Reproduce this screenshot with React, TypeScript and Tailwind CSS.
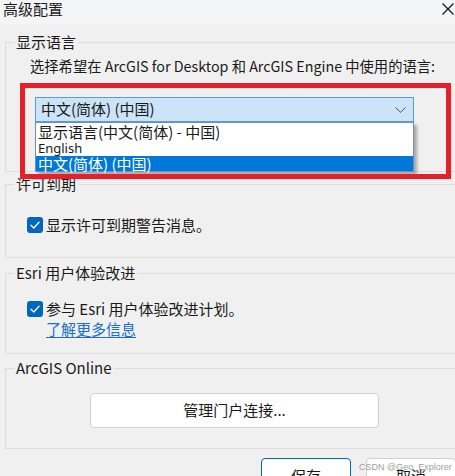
import type { ReactNode } from 'react'

const FONT = "font-['Noto_Sans_CJK_SC','Noto_Sans',sans-serif]"

function GroupBox({ label, className, children }: { label: string; className?: string; children: ReactNode }) {
  return (
    <div className={`relative ml-[5px] w-[470px] border border-[#dcdcdc] ${className ?? ''}`}>
      <span className="absolute left-[8px] top-[-11px] bg-[#f0f0f0] px-[2px] text-[15px] leading-[20px] text-[#1a1a1a]">
        {label}
      </span>
      {children}
    </div>
  )
}

function CheckBox() {
  return (
    <span className="flex h-[16px] w-[16px] shrink-0 items-center justify-center rounded-[3px] bg-[#0067c0]">
      <svg width="10" height="8" viewBox="0 0 10 8" fill="none">
        <path d="M1 4.2 L3.8 7 L9 1.2" stroke="#ffffff" strokeWidth="1.3" strokeLinecap="round" strokeLinejoin="round" />
      </svg>
    </span>
  )
}

export default function App() {
  return (
    <div className={`relative h-[476px] w-[455px] overflow-hidden bg-[#f0f0f0] ${FONT} text-[#1a1a1a]`}>
      {/* title bar */}
      <div className="flex h-[24px] items-start justify-between bg-[#f3f5f9] pl-[3px] pr-[1px]">
        <span className="text-[15px] leading-[18px]">高级配置</span>
        <svg width="12" height="12" viewBox="0 0 12 12" className="mt-[3px]">
          <path d="M0.5 0.5 L11.5 11.5 M11.5 0.5 L0.5 11.5" stroke="#111" strokeWidth="1.2" />
        </svg>
      </div>

      {/* 显示语言 */}
      <GroupBox label="显示语言" className="mt-[18px] pb-[49px] pt-[13px]">
        <div className="whitespace-nowrap pl-[24px] text-[14.3px] leading-[20px]">
          选择希望在 ArcGIS for Desktop 和 ArcGIS Engine 中使用的语言:
        </div>
        <div className="relative ml-[29px] mt-[21px] w-[379px]">
          <div className="flex h-[25px] items-center justify-between border border-[#5b9bd9] bg-[#cce4f7] pl-[5px] pr-[7px] text-[15px]">
            <span>中文(简体) (中国)</span>
            <svg width="11" height="6" viewBox="0 0 11 6" fill="none">
              <path d="M0.5 0.5 L5.5 5.3 L10.5 0.5" stroke="#555" strokeWidth="1" />
            </svg>
          </div>
          <div className="absolute left-0 top-full w-[379px] border border-[#6a8fc4] bg-white shadow-[3px_3px_3px_rgba(0,0,0,0.3)]">
            <div className="h-[18px] pl-[2px] text-[15px] leading-[18px]">显示语言(中文(简体) - 中国)</div>
            <div className="h-[15px] pl-[2px] font-['Noto_Sans',sans-serif] text-[13px] leading-[15px]">English</div>
            <div className="h-[15px] bg-[#0078d7] pl-[2px] text-[15px] leading-[15px] text-white">中文(简体) (中国)</div>
          </div>
        </div>
      </GroupBox>

      {/* 许可到期 */}
      <GroupBox label="许可到期" className="mt-[12px] pb-[24px] pt-[32px]">
        <div className="flex h-[16px] items-center gap-[3px] pl-[21px] text-[15px] leading-[20px]">
          <CheckBox />
          <span>显示许可到期警告消息。</span>
        </div>
      </GroupBox>

      {/* Esri 用户体验改进 */}
      <GroupBox label="Esri 用户体验改进" className="mt-[15px] pb-[16px] pt-[27px]">
        <div className="flex h-[16px] items-center gap-[3px] pl-[21px] text-[15px] leading-[20px]">
          <CheckBox />
          <span>参与 Esri 用户体验改进计划。</span>
        </div>
        <div className="mt-[4px] pl-[40px] text-[15px] leading-[16px]">
          <span className="text-[#1a6fd0] underline underline-offset-[2px]">了解更多信息</span>
        </div>
      </GroupBox>

      {/* ArcGIS Online */}
      <GroupBox label="ArcGIS Online" className="mt-[14px] pb-[20px] pt-[24px]">
        <div className="pl-[84px]">
          <button className="flex h-[35px] w-[289px] items-center justify-center rounded-[4px] border border-[#d0d0d0] bg-white text-[15px]">
            管理门户连接...
          </button>
        </div>
      </GroupBox>

      {/* footer buttons */}
      <div className="mt-[9px] flex gap-[15px] pl-[261px]">
        <button className="h-[30px] w-[90px] shrink-0 rounded-[4px] border border-[#0067c0] bg-white pt-[6px] text-[15px] leading-[20px]">
          保存
        </button>
        <button className="h-[30px] w-[90px] shrink-0 rounded-[4px] border border-[#d0d0d0] bg-white pt-[6px] text-[15px] leading-[20px]">
          取消
        </button>
      </div>

      {/* annotation */}
      <div className="pointer-events-none absolute left-[20px] top-[83px] h-[96px] w-[431px] border-[5px] border-[#e5202a]" />
      <span className="pointer-events-none absolute left-[359px] top-[461px] whitespace-nowrap font-['Liberation_Sans',sans-serif] text-[9px] text-[rgba(120,120,120,0.75)]">
        CSDN @Geo_Explorer
      </span>
    </div>
  )
}
